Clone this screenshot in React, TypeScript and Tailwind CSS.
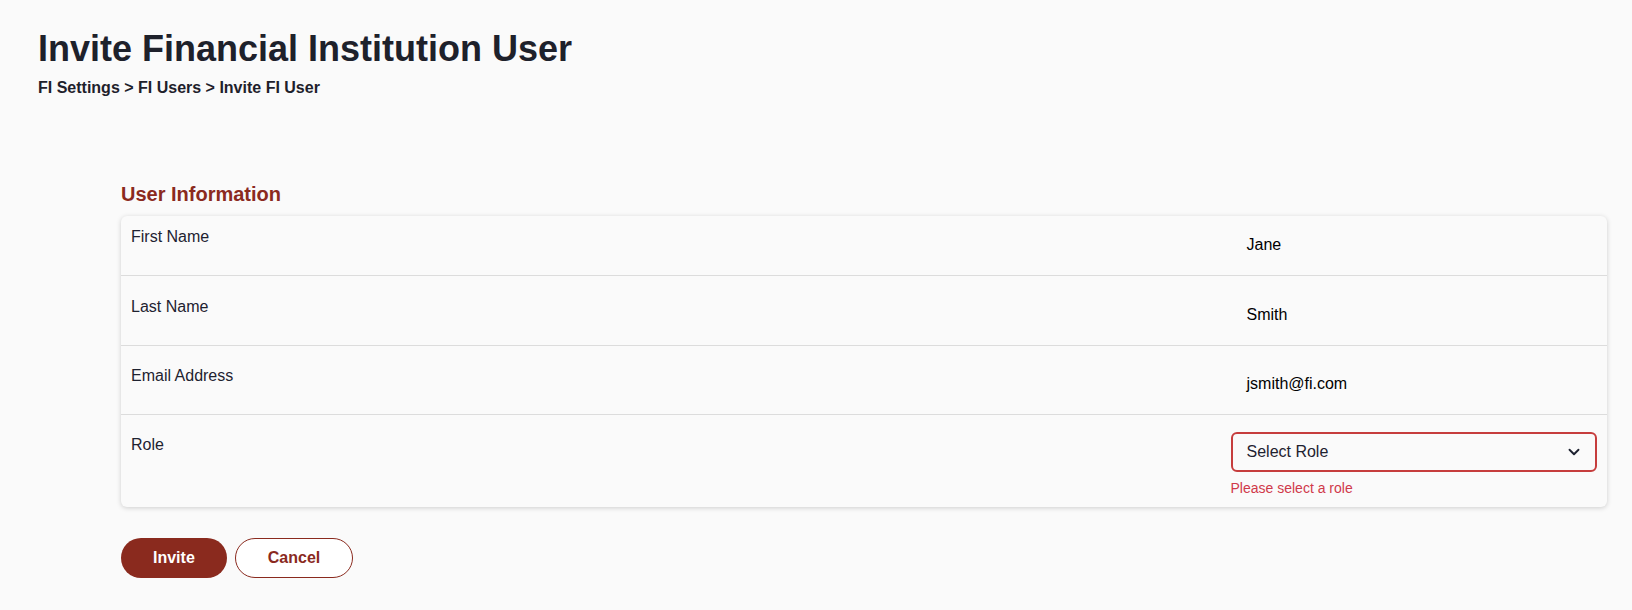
import React from "react";
import { ChevronDown } from "lucide-react";

const rows = [
  { label: "First Name", value: "Jane", pt: "pt-[9px]" },
  { label: "Last Name", value: "Smith", pt: "pt-[19px]" },
  { label: "Email Address", value: "jsmith@fi.com", pt: "pt-[18px]" },
];

export default function App() {
  return (
    <div
      className="min-h-[610px] bg-[#fafafa] text-[#1e2230]"
      style={{ fontFamily: '"Liberation Sans", Arial, sans-serif' }}
    >
      <div className="pl-[38px] pt-[29px]">
        <h1 className="text-4xl font-bold leading-10 text-[#1e212b]">
          Invite Financial Institution User
        </h1>
        <div className="mt-[7px] text-base font-bold leading-6 text-[#1e212b]">
          FI Settings &gt; FI Users &gt; Invite FI User
        </div>
      </div>

      <div className="pl-[121px] pr-[25px] pt-[80px]">
        <h2 className="text-xl font-bold leading-7 text-[#8b2a1e]">User Information</h2>
        <div className="mt-2 rounded-md bg-[#fafafa] shadow-[0_1px_5px_rgba(0,0,0,0.18)]">
          {rows.map((r) => (
            <div
              key={r.label}
              className={"flex border-b border-[#dcdcdc] px-[10px] pb-[10px] " + r.pt}
            >
              <div className="w-3/4 text-base leading-6">{r.label}</div>
              <div className="w-1/4">
                <div className="flex h-10 items-center border-2 border-transparent px-[14px] text-base text-black">
                  {r.value}
                </div>
              </div>
            </div>
          ))}
          <div className="flex px-[10px] pt-[17px] pb-[9px]">
            <div className="w-3/4 pt-[1px] text-base leading-6">Role</div>
            <div className="w-1/4">
              <div className="flex h-10 items-center justify-between rounded-md border-2 border-[#c63d3d] pl-[14px] pr-[12px] text-base">
                <span>Select Role</span>
                <ChevronDown size={18} strokeWidth={2.5} className="text-[#1e2230]" />
              </div>
              <div className="mt-1.5 text-sm leading-5 text-[#d0394a]">Please select a role</div>
            </div>
          </div>
        </div>

        <div className="mt-[31px] flex gap-2">
          <button className="h-10 rounded-full bg-[#8a2a1e] px-8 text-base font-bold text-white">
            Invite
          </button>
          <button className="h-10 rounded-full border border-[#8a2a1e] bg-white px-8 text-base font-bold text-[#8a2a1e]">
            Cancel
          </button>
        </div>
      </div>
    </div>
  );
}
